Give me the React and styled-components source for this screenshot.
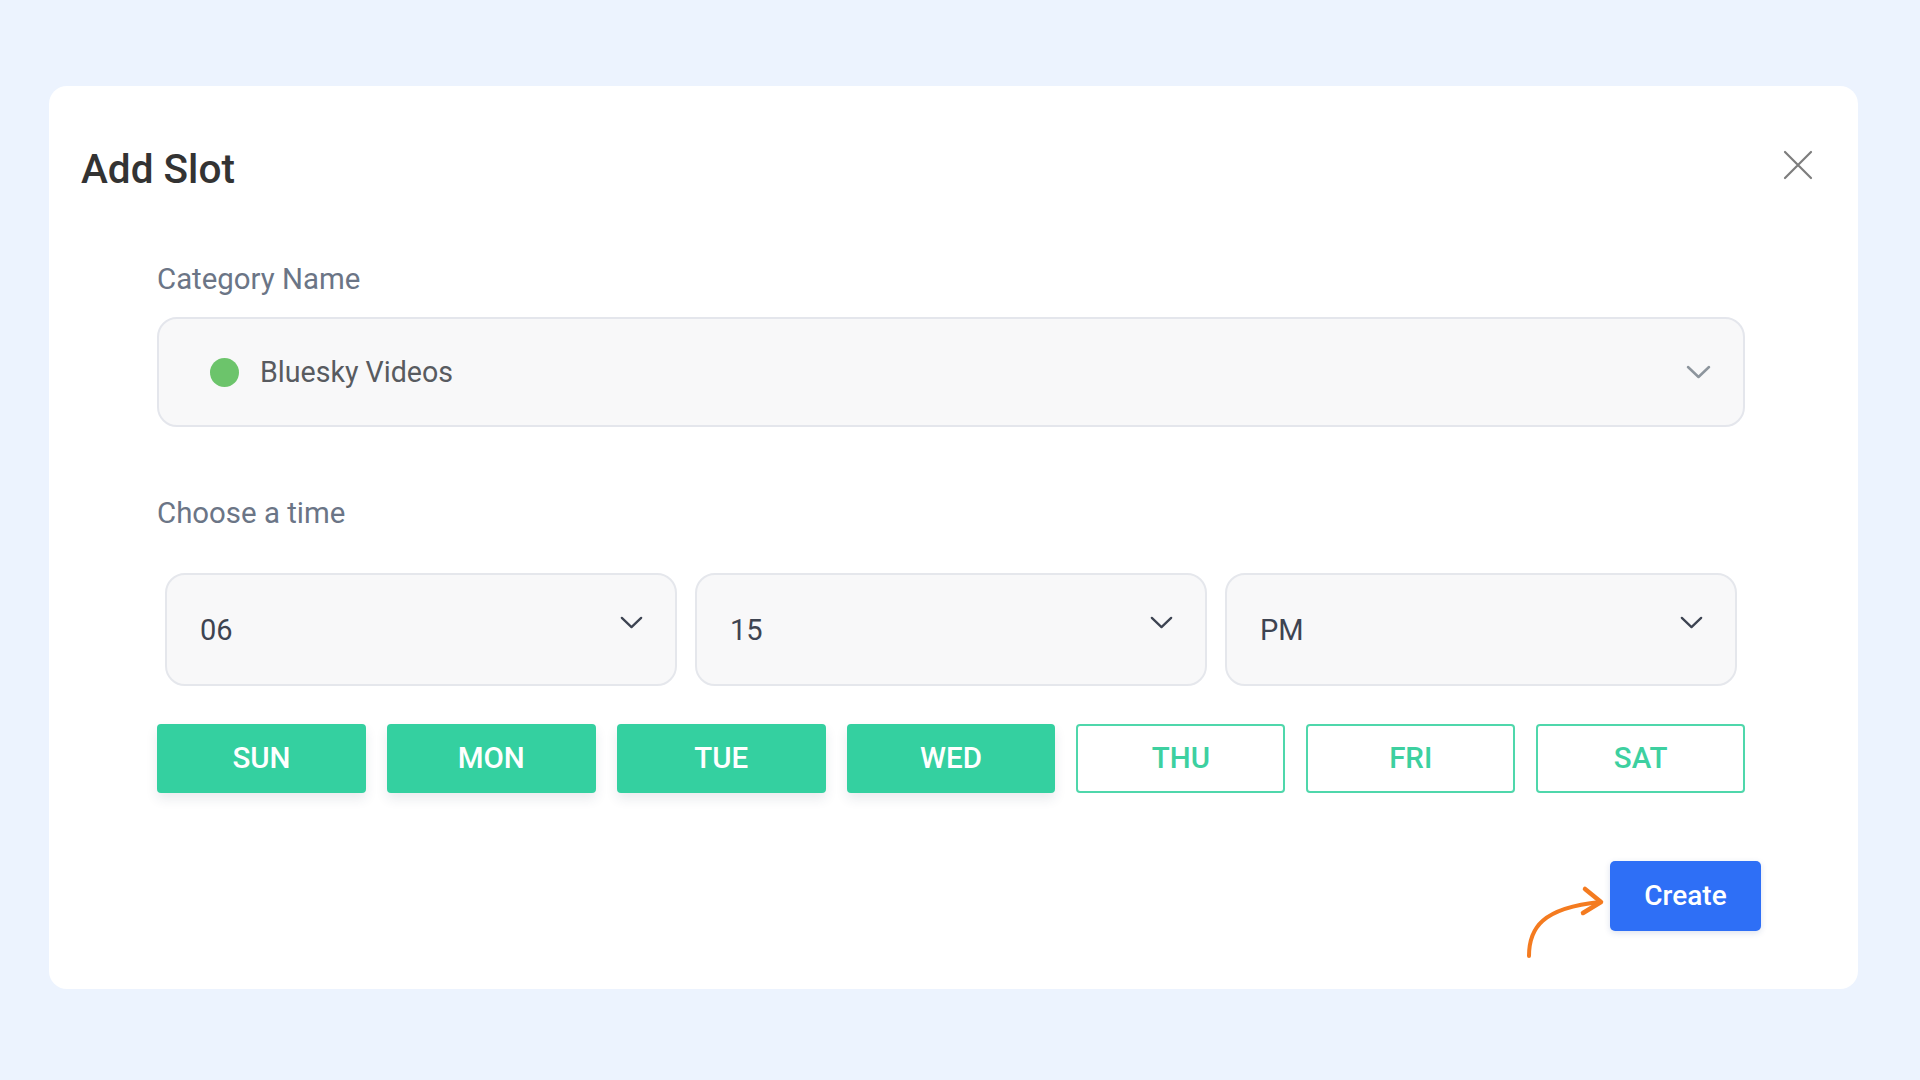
import styled, { createGlobalStyle } from "styled-components";
import { useState } from "react";

const days = ['SUN', 'MON', 'TUE', 'WED', 'THU', 'FRI', 'SAT'];

const GlobalStyle = createGlobalStyle`
  html, body {
    margin: 0;
    padding: 0;
    background-color: #ecf3fe;
    font-family: Roboto, "Liberation Sans", Arial, sans-serif;
  }

  * {
    box-sizing: border-box;
  }
`;

const Page = styled.div`
  min-height: 1080px;
  padding-top: 86px;
  padding-left: 49px;
`;

const Modal = styled.div`
  width: 1809px;
  background-color: #fff;
  border-radius: 18px;
`;

const Header = styled.div`
  display: flex;
  justify-content: space-between;
  align-items: center;
  padding: 59px 45px 0 32px;
`;

const Title = styled.h2`
  margin: 0;
  font-size: 40.5px;
  line-height: 48px;
  font-weight: 500;
  color: #333;
`;

const Close = styled.button`
  display: flex;
  align-items: center;
  justify-content: center;
  width: 30px;
  height: 30px;
  padding: 0;
  margin-top: -8px;
  border: none;
  background: none;
  cursor: pointer;
`;

const Body = styled.div`
  padding: 69px 113px 0 108px;
`;

const Label = styled.div`
  font-size: 29.4px;
  line-height: 35px;
  color: #6b7586;
  margin-top: ${({ $gap }) => $gap || 0}px;
`;

const Select = styled.div`
  display: flex;
  align-items: center;
  height: 110px;
  margin-top: 20px;
  padding: 0 32px 0 51px;
  background-color: #f8f8f9;
  border: 2px solid #e4e6ec;
  border-radius: 20px;
  cursor: pointer;

  .value {
    flex: 1;
    font-size: 28.6px;
    color: #585b60;
  }
`;

const Dot = styled.span`
  width: 29px;
  height: 29px;
  margin-right: 21px;
  border-radius: 50%;
  background-color: ${({ $color }) => $color};
`;

const TimeRow = styled.div`
  display: grid;
  grid-template-columns: repeat(3, 1fr);
  gap: 18px;
  margin: 42px 8px 0;
`;

const TimeBox = styled.div`
  display: flex;
  align-items: center;
  justify-content: space-between;
  height: 113px;
  padding: 0 32px 0 33px;
  background-color: #f8f8f9;
  border: 2px solid #e5e7ec;
  border-radius: 20px;
  cursor: pointer;
  font-size: 29px;
  color: #3e4451;

  svg {
    margin-bottom: 14px;
  }
`;

const DayRow = styled.div`
  display: grid;
  grid-template-columns: repeat(7, 1fr);
  gap: 21px;
  margin-top: 38px;
`;

const Day = styled.button`
  height: 69px;
  padding: 0 0 2px;
  font-family: inherit;
  font-size: 29.5px;
  font-weight: 500;
  border-radius: 4px;
  cursor: pointer;
  border: 2px solid ${({ $active }) => ($active ? '#34d0a0' : '#4fd7ab')};
  background-color: ${({ $active }) => ($active ? '#34d0a0' : '#fff')};
  color: ${({ $active }) => ($active ? '#fff' : '#3dd0a0')};
  box-shadow: ${({ $active }) => ($active ? '0 6px 12px rgba(40, 60, 90, 0.1)' : 'none')};
`;

const Footer = styled.div`
  display: flex;
  justify-content: flex-end;
  padding: 68px 97px 58px 0;
`;

const CreateWrap = styled.div`
  position: relative;
`;

const Arrow = styled.svg`
  position: absolute;
  right: calc(100% + 2px);
  top: 23px;
`;

const Create = styled.button`
  width: 151px;
  height: 70px;
  padding: 0 0 2px;
  font-family: inherit;
  font-size: 28px;
  font-weight: 500;
  color: #fff;
  background-color: #2e6ff6;
  border: none;
  border-radius: 5px;
  cursor: pointer;
  box-shadow: 0 2px 6px rgba(30, 60, 140, 0.15);
`;

const Chevron = ({ color, width = 25, height = 14, stroke = 2.5 }) => (
  <svg width={width} height={height} viewBox="0 0 25 14" fill="none">
    <path d="M2 2 L12.5 12 L23 2" stroke={color} strokeWidth={stroke} strokeLinecap="round" strokeLinejoin="round" />
  </svg>
);

const App = () => {
  const [selected, setSelected] = useState(['SUN', 'MON', 'TUE', 'WED']);

  const toggleDay = (day) => {
    setSelected(selected.includes(day) ? selected.filter(d => d !== day) : [...selected, day]);
  }

  return (
    <>
      <GlobalStyle />
      <Page>
        <Modal>
          <Header>
            <Title>Add Slot</Title>
            <Close>
              <svg width="30" height="30" viewBox="0 0 30 30">
                <path d="M2 2 L28 28 M28 2 L2 28" stroke="#7d7d7d" strokeWidth="2.2" strokeLinecap="round" />
              </svg>
            </Close>
          </Header>
          <Body>
            <Label>Category Name</Label>
            <Select>
              <Dot $color="#6cc46b" />
              <span className="value">Bluesky Videos</span>
              <Chevron color="#8d959d" />
            </Select>

            <Label $gap={69}>Choose a time</Label>
            <TimeRow>
              {['06', '15', 'PM'].map(value =>
                <TimeBox key={value}>
                  <span>{value}</span>
                  <Chevron color="#3d4452" width={23} height={13} />
                </TimeBox>
              )}
            </TimeRow>

            <DayRow>
              {days.map(day =>
                <Day key={day} $active={selected.includes(day)} onClick={() => toggleDay(day)}>
                  {day}
                </Day>
              )}
            </DayRow>
          </Body>
          <Footer>
            <CreateWrap>
              <Arrow width="84" height="78" viewBox="0 0 84 78" fill="none">
                <path d="M5 72 C 5 44, 18 24, 76 18" stroke="#f47b20" strokeWidth="4" strokeLinecap="round" />
                <path d="M61 5 L77 18 L59 29" stroke="#f47b20" strokeWidth="4.5" strokeLinecap="round" strokeLinejoin="round" />
              </Arrow>
              <Create>Create</Create>
            </CreateWrap>
          </Footer>
        </Modal>
      </Page>
    </>
  );
};

export default App;
